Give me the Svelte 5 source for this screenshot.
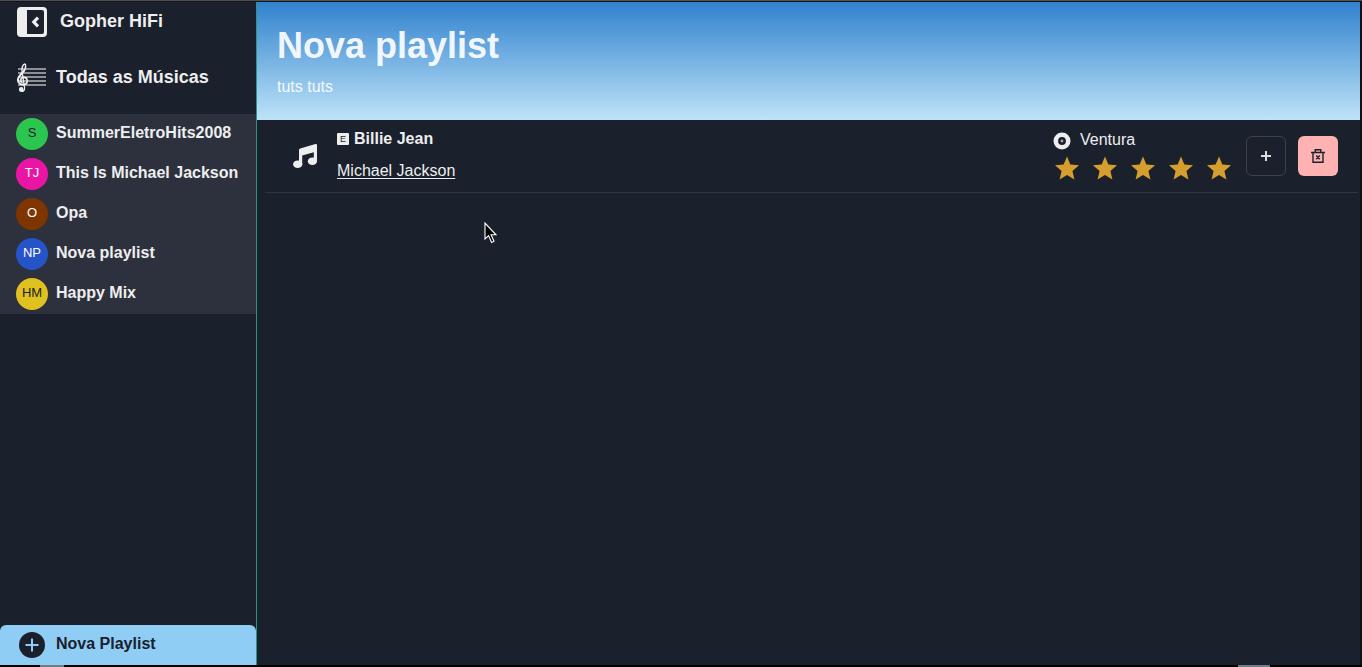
<script>
  const playlists = [
    { name: 'SummerEletroHits2008', initials: 'S', color: '#2bc550', ink: '#1a202c' },
    { name: 'This Is Michael Jackson', initials: 'TJ', color: '#e815a5', ink: '#ffffff' },
    { name: 'Opa', initials: 'O', color: '#7f3500', ink: '#ffffff' },
    { name: 'Nova playlist', initials: 'NP', color: '#2553c8', ink: '#ffffff' },
    { name: 'Happy Mix', initials: 'HM', color: '#dfc11f', ink: '#1a202c' }
  ];
  const songs = [{ title: 'Billie Jean', artist: 'Michael Jackson', album: 'Ventura', stars: 5 }];
</script>

<div class="page">
  <div class="app">
    <aside class="sidebar">
      <div class="brand">
        <button class="plain" aria-label="Recolher menu">
          <svg width="30" height="30" viewBox="0 0 30 30">
            <path fill="#eeeeef" fill-rule="evenodd" d="M4 0h22a4 4 0 0 1 4 4v22a4 4 0 0 1-4 4H4a4 4 0 0 1-4-4V4a4 4 0 0 1 4-4zM10 3v24h15a2 2 0 0 0 2-2V5a2 2 0 0 0-2-2z" />
            <path fill="none" stroke="#eeeeef" stroke-width="3.2" d="M21 10.6 16.8 15l4.2 4.4" />
          </svg>
        </button>
        <span>Gopher HiFi</span>
      </div>

      <a class="all" href="#musicas">
        <svg width="32" height="32" viewBox="0 0 32 32">
          <g fill="#8b8f96">
            <rect x="2" y="6" width="28" height="2" /><rect x="2" y="10" width="28" height="2" />
            <rect x="2" y="14" width="28" height="2" /><rect x="2" y="18" width="28" height="2" />
            <rect x="2" y="22" width="28" height="2" />
          </g>
          <g fill="none" stroke="#eeeeef" stroke-linecap="round">
            <path stroke-width="1.5" d="M6.2 10.5C5.2 6 6.8 2.2 8.8 2c1.4.5 1.1 4.2-.8 6.8" />
            <path stroke-width="2" d="M8.3 8.4C6 11.8 2.1 14 1.9 18c0 3 2.7 4.7 5.5 4.5" />
            <path stroke-width="1.7" d="M7.4 22.6c5.4-.2 4.6-7.4.3-7.3-3.2.1-4.2 4-1.7 5.2" />
            <path stroke-width="1.3" d="M6.2 10.3 8.6 25.6c.3 3-1.9 4.7-4.2 3.2" />
          </g>
          <circle cx="5.2" cy="27.4" r="2.3" fill="#eeeeef" />
        </svg>
        <span>Todas as Músicas</span>
      </a>

      <nav class="lists">
        {#each playlists as list}
          <a href="#playlist">
            <span class="avatar" style="background:{list.color};color:{list.ink}">{list.initials}</span>
            <span class="name">{list.name}</span>
          </a>
        {/each}
      </nav>

      <button class="create">
        <svg width="26" height="26" viewBox="0 0 26 26">
          <circle cx="13" cy="13" r="13" fill="#1a202c" />
          <path d="M13 6.5v13M6.5 13h13" stroke="#90cdf4" stroke-width="2" />
        </svg>
        <span>Nova Playlist</span>
      </button>
    </aside>

    <main>
      <header>
        <h1>Nova playlist</h1>
        <p>tuts tuts</p>
      </header>

      {#each songs as song}
        <article>
          <svg class="note" width="24" height="24" viewBox="0 0 24 24" fill="#eeeeef">
            <path d="M6 6.2c0-.8.5-1.4 1.2-1.6L22.4.1c.9-.3 1.6.3 1.6 1.2v16.2h-3.2V8.2L9.2 11.6v8.8H6z" />
            <ellipse cx="4.7" cy="20.2" rx="4.6" ry="3.8" />
            <ellipse cx="19.4" cy="17.2" rx="4.6" ry="3.8" />
          </svg>
          <div class="info">
            <div class="title"><span class="explicit">E</span><strong>{song.title}</strong></div>
            <a href="#artista">{song.artist}</a>
          </div>
          <div class="meta">
            <div class="album">
              <svg width="18" height="18" viewBox="0 0 18 18">
                <circle cx="9" cy="9" r="8.5" fill="#eeeeef" />
                <circle cx="9" cy="9" r="2.6" fill="#eeeeef" stroke="#1a202c" stroke-width="2.6" />
                <circle cx="9" cy="9" r="1.2" fill="#a8abb2" />
              </svg>
              <span>{song.album}</span>
            </div>
            <div class="stars" role="img" aria-label="{song.stars} estrelas">
              {#each Array(song.stars) as _}
                <svg width="24" height="24" viewBox="2 1.5 20 20">
                  <path fill="#d69e2e" d="M12 17.27 18.18 21l-1.64-7.03L22 9.24l-7.19-.61L12 2 9.19 8.63 2 9.24l5.46 4.73L5.82 21z" />
                </svg>
              {/each}
            </div>
          </div>
          <div class="actions">
            <button class="action add" aria-label="Adicionar">
              <svg width="12" height="12" viewBox="0 0 12 12"><path d="M6 1v10M1 6h10" stroke="#dcdde0" stroke-width="2" /></svg>
            </button>
            <button class="action remove" aria-label="Remover">
              <svg width="14" height="14" viewBox="0 0 14 14" fill="none" stroke="#1a202c" stroke-width="1.4">
                <path d="M0 3.5h14M2 3.5v9.8h10V3.5M4.2 3V.7h5.6V3M5.2 6.6l3.6 3.6M8.8 6.6l-3.6 3.6" />
              </svg>
            </button>
          </div>
        </article>
      {/each}
    </main>
  </div>
  <footer><i></i><i></i></footer>
</div>

<svg class="cursor" width="13" height="22" viewBox="0 0 13 22">
  <path d="M1 1v16l3.6-3.4 3 6.8 2.4-1.1-2.9-6.5H12z" fill="#000" stroke="#fff" stroke-width="1.1" />
</svg>

<style>
  :global(body) { background: #000; }
  .page {
    box-sizing: border-box;
    min-height: 100vh;
    display: flex;
    flex-direction: column;
    border-top: 1px solid #51504b;
    font: 16px/24px "Liberation Sans", Arial, sans-serif;
    color: #eeeeef;
  }
  .app {
    flex: 1;
    display: flex;
    background: #1a202c;
    border-top: 1px solid #14171f;
    border-right: 2px solid #101216;
  }
  a { color: inherit; text-decoration: none; }
  button { font: inherit; color: inherit; border: 0; padding: 0; cursor: pointer; }
  svg { display: block; flex: none; }
  .plain { background: none; }
  .sidebar {
    flex: none;
    width: 256px;
    display: flex;
    flex-direction: column;
    border-right: 1px solid #2c9489;
  }
  .brand, .all { display: flex; align-items: center; font-size: 18px; font-weight: 700; }
  .brand { height: 40px; padding-left: 17px; gap: 13px; }
  .brand span, .all span { padding-bottom: 2px; }
  .all { height: 72px; padding-left: 16px; gap: 8px; }
  .lists { background: #2d313d; }
  .lists a { display: flex; align-items: center; height: 40px; padding-left: 16px; gap: 8px; font-weight: 700; }
  .avatar {
    width: 32px;
    height: 32px;
    line-height: 30px;
    border-radius: 50%;
    text-align: center;
    font-size: 13px;
    font-weight: 400;
  }
  .name, .create span { padding-bottom: 2px; }
  .create {
    height: 40px;
    margin-top: auto;
    padding-left: 19px;
    display: flex;
    align-items: center;
    gap: 11px;
    background: #90cdf4;
    color: #1a202c;
    font-weight: 700;
    border-radius: 6px 6px 0 0;
  }
  main { flex: 1; min-width: 0; }
  header { padding: 20px; background: linear-gradient(#3182ce, #bee3f8); color: rgba(255, 255, 255, 0.92); }
  h1 { margin: 0; font-size: 36px; line-height: 48px; }
  p { margin: 5px 0 1px; }
  article {
    display: flex;
    align-items: center;
    height: 72px;
    margin: 0 2px 0 8px;
    padding: 0 20px 0 28px;
    border-bottom: 1px solid #30353f;
  }
  .info { flex: 1; margin-left: 20px; line-height: 32px; padding-bottom: 2px; }
  .info a { text-decoration: underline; text-underline-offset: 2px; }
  .title { display: flex; align-items: center; gap: 5px; }
  .explicit {
    width: 12px;
    height: 12px;
    border-radius: 1px;
    background: #eeeeef;
    color: #1a202c;
    font-size: 9px;
    line-height: 12px;
    text-align: center;
  }
  .album { display: flex; align-items: center; gap: 9px; height: 24px; margin: 0 0 3px -2px; }
  .album span { padding-bottom: 2px; }
  .stars { display: flex; gap: 14px; height: 27px; }
  .actions { display: flex; gap: 12px; margin-left: 15px; }
  .action {
    box-sizing: border-box;
    width: 40px;
    height: 40px;
    display: flex;
    align-items: center;
    justify-content: center;
    border-radius: 6px;
  }
  .add { background: none; border: 1px solid #3c414c; }
  .remove { background: #feb2b2; }
  footer { height: 2px; display: flex; justify-content: space-between; padding: 0 92px 0 40px; background: #000; }
  footer i { width: 24px; background: #737b88; }
  footer i:last-child { width: 32px; }
  .cursor { position: absolute; left: 484px; top: 222px; }
</style>
